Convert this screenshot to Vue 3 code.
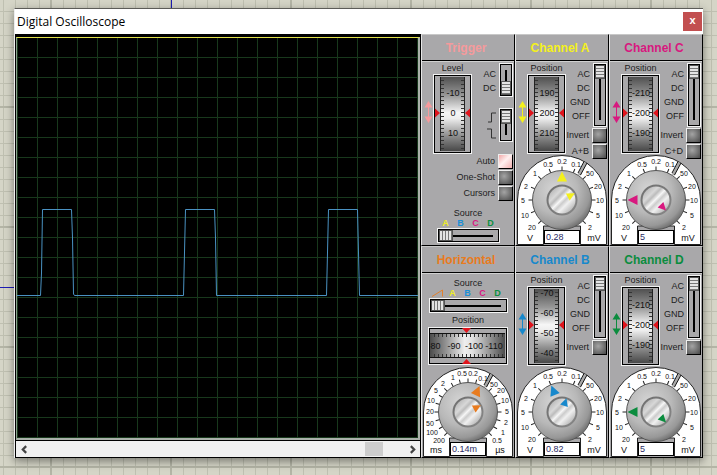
<script setup>
import { reactive } from 'vue'

const sourceColors = { A: '#f0ee28', B: '#1c8fd6', C: '#d81884', D: '#0c8f42' }
const couplings = ['AC', 'DC', 'GND', 'OFF']

const voltScale = {
  step: 22.5,
  marks: [
    [-6, '20', -30, 27], [-5, '10', -37, 15], [-4, '5', -39, 0], [-3, '2', -36, -14], [-2, '1', -27, -27],
    [-1, '0.5', -14, -36], [0, '0.2', 0, -39], [1, '0.1', 14, -36], [2, '50', 28, -27], [3, '20', 36, -14],
    [4, '10', 38, 0], [5, '5', 36, 15], [6, '2', 28, 27]
  ],
  units: ['V', 'mV']
}
const timeScale = {
  step: 15,
  marks: [
    [-9, '200', -29, 28], [-8, '100', -36, 20], [-7, '50', -38, 11], [-6, '20', -38, -1], [-5, '10', -37, -12],
    [-4, '5', -32, -22], [-3, '2', -25, -29], [-2, '1', -15, -35], [-1, '0.5', -6, -39], [0, '0.2', 5, -39],
    [1, '0.1', 15, -34], [3, '50', 26, -28], [4, '20', 33, -22], [5, '10', 37, -12], [6, '5', 39, -1],
    [7, '2', 38, 10], [8, '1', 35, 20], [9, '0.5', 29, 28]
  ],
  units: ['ms', 'µs']
}

function channel(letter, color, marks, offset, toggles, value, coarse, fine) {
  return {
    id: 'channel-' + letter.toLowerCase(),
    title: 'Channel ' + letter,
    color,
    wheel: { label: 'Position', marks, offset },
    switches: [{ id: 'coupling', options: couplings, value: 0, size: 'tall' }],
    toggles: toggles.map((text) => ({ text, on: false })),
    dial: { scale: voltScale, value, coarse, fine }
  }
}

const modules = reactive([
  {
    id: 'trigger',
    title: 'Trigger',
    color: '#f59a9c',
    wheel: { label: 'Level', marks: ['-10', '0', '10'], offset: 18 },
    switches: [
      { id: 'coupling', options: ['AC', 'DC'], value: 1, size: 'short' },
      { id: 'edge', options: ['rise', 'fall'], edges: true, value: 0, size: 'short' }
    ],
    toggles: [{ text: 'Auto', on: true }, { text: 'One-Shot', on: false }, { text: 'Cursors', on: false }],
    source: { ramp: false, value: 0 }
  },
  channel('A', '#f4f01c', ['190', '200', '210'], 18, ['Invert', 'A+B'], '0.28', 0, 62),
  channel('C', '#d8187f', ['-210', '-200', '-190'], 18, ['Invert', 'C+D'], '5', -90, 136),
  {
    id: 'horizontal',
    title: 'Horizontal',
    color: '#e87b1e',
    source: { ramp: true, value: 0 },
    band: { marks: ['-80', '-90', '-100', '-110'] },
    dial: { scale: timeScale, value: '0.14m', coarse: 24, fine: 62 }
  },
  channel('B', '#1788cc', ['-70', '-60', '-50', '-40'], 6, ['Invert'], '0.82', -22, 18),
  channel('D', '#0b8c3e', ['-210', '-200', '-190'], 18, ['Invert'], '5', -90, 136)
])

const ticks = Array.from({ length: 18 }, (_, i) => 6 + i * 4)
</script>

<template>
  <main class="desk">
    <span class="wire wire-top"></span>
    <span class="wire wire-left"></span>
    <svg class="defs" aria-hidden="true">
      <defs>
        <linearGradient id="rollV" x1="0" y1="0" x2="0" y2="1">
          <stop offset="0" stop-color="#505050" /><stop offset=".25" stop-color="#989898" />
          <stop offset=".48" stop-color="#f6f6f6" /><stop offset=".56" stop-color="#eee" />
          <stop offset=".78" stop-color="#949494" /><stop offset="1" stop-color="#484848" />
        </linearGradient>
        <linearGradient id="rollH" x1="0" y1="0" x2="1" y2="0">
          <stop offset="0" stop-color="#4c4c4c" /><stop offset=".22" stop-color="#959595" />
          <stop offset=".46" stop-color="#eee" /><stop offset=".56" stop-color="#e2e2e2" />
          <stop offset=".8" stop-color="#929292" /><stop offset="1" stop-color="#4c4c4c" />
        </linearGradient>
        <radialGradient id="knob" cx=".38" cy=".34" r=".7">
          <stop offset="0" stop-color="#d6d6d6" /><stop offset=".55" stop-color="#b8b8b8" />
          <stop offset=".85" stop-color="#989898" /><stop offset="1" stop-color="#6c6c6c" />
        </radialGradient>
        <linearGradient id="ring" x1="0" y1="0" x2="1" y2="1">
          <stop offset="0" stop-color="#6e6e6e" /><stop offset="1" stop-color="#888" />
        </linearGradient>
        <linearGradient id="cap" x1="0" y1="0" x2="1" y2="1">
          <stop offset=".1" stop-color="#b4b4b4" /><stop offset=".3" stop-color="#d8d8d8" />
          <stop offset=".38" stop-color="#bcbcbc" /><stop offset=".48" stop-color="#f6f6f6" />
          <stop offset=".56" stop-color="#ccc" /><stop offset=".66" stop-color="#f0f0f0" />
          <stop offset=".9" stop-color="#b0b0b0" />
        </linearGradient>
        <clipPath id="rollClip"><rect x="7" y="3" width="25" height="74" /></clipPath>
        <clipPath id="bandClip"><rect x="2" y="6" width="75" height="25" /></clipPath>
      </defs>
    </svg>

    <section class="window">
      <header class="titlebar">
        <h1>Digital Oscilloscope</h1>
        <button class="close" type="button" aria-label="Close">x</button>
      </header>

      <div class="instrument">
        <div class="scope">
          <div class="screen">
            <svg viewBox="0 0 401 400" preserveAspectRatio="none">
              <path
                d="M0 257.5H23.5L24.5 235 25.5 171.5H54.5L55.5 200 56.5 256 57.5 257.5H166.5L168.5 171.5H197.5L198.5 200 199.5 257.5H309.5L311.5 171.5H340.5L342.5 257.5H401"
              />
            </svg>
          </div>
          <div class="scrollbar">
            <button type="button" aria-label="Scroll left">
              <svg viewBox="0 0 8 8"><path d="M5.5 1 2.5 4l3 3" /></svg>
            </button>
            <span class="rail"><span class="grip"></span></span>
            <button type="button" aria-label="Scroll right">
              <svg viewBox="0 0 8 8"><path d="M2.5 1l3 3-3 3" /></svg>
            </button>
          </div>
        </div>

        <div class="modules">
          <section v-for="m in modules" :key="m.id" class="module" :class="m.id">
            <h2 :style="{ color: m.color }">{{ m.title }}</h2>
            <div class="body">
              <div v-if="m.wheel" class="strip" :class="{ compact: m.dial }">
                <svg class="arrows" viewBox="0 0 9 22" :style="{ color: m.color }">
                  <path d="M4.5 0 8.5 6.5H.5ZM4.5 22 .5 15.5H8.5ZM4 5H5V17H4Z" fill="currentColor" />
                </svg>
                <div class="position">
                  <label :for="m.id + '-wheel'">{{ m.wheel.label }}</label>
                  <div class="stack">
                    <svg class="wheel" viewBox="0 0 39 80">
                      <rect x=".5" y=".5" width="38" height="79" fill="none" stroke="#f2f2f2" />
                      <rect x="1.5" y="1.5" width="36" height="77" fill="none" stroke="#000" />
                      <rect x="7" y="3" width="25" height="74" fill="url(#rollV)" />
                      <path d="M7.5 3V77M31.5 3V77" stroke="#222" />
                      <g clip-path="url(#rollClip)">
                        <path v-for="t in ticks" :key="t" :d="`M8 ${t}.5h3M28 ${t}.5h3`" stroke="#333" />
                        <text
                          v-for="(text, i) in m.wheel.marks"
                          :key="text"
                          x="20"
                          :y="m.wheel.offset + i * 20 + 4"
                          class="roll-text"
                        >{{ text }}</text>
                      </g>
                      <path d="M2 34.5 7 39 2 43.5ZM37 34.5 32 39l5 4.5Z" fill="#e0141c" />
                    </svg>
                    <input :id="m.id + '-wheel'" class="ghost" type="range" />
                  </div>
                </div>
                <div class="side">
                  <div v-for="s in m.switches" :key="s.id" class="switch">
                    <span class="options" :class="{ edges: s.edges }">
                      <template v-if="s.edges">
                        <svg viewBox="0 0 9 11"><path d="M1 10H4.5V1H9" /></svg>
                        <svg viewBox="0 0 9 11"><path d="M0 1H4.5V10H9" /></svg>
                      </template>
                      <template v-else>
                        <label v-for="o in s.options" :key="o" :for="m.id + '-' + s.id">{{ o }}</label>
                      </template>
                    </span>
                    <span class="slot upright" :class="s.size">
                      <input
                        :id="m.id + '-' + s.id"
                        v-model="s.value"
                        type="range"
                        min="0"
                        :max="s.options.length - 1"
                        :aria-label="s.id"
                      />
                    </span>
                  </div>
                  <div v-for="t in m.toggles" :key="t.text" class="toggle">
                    <label :for="m.id + '-' + t.text">{{ t.text }}</label>
                    <button
                      :id="m.id + '-' + t.text"
                      type="button"
                      :class="{ lit: t.on }"
                      :aria-pressed="t.on"
                      @click="t.on = !t.on"
                    ></button>
                  </div>
                </div>
              </div>

              <div v-if="m.source" class="source">
                <label :for="m.id + '-source'">Source</label>
                <div class="letters">
                  <svg v-if="m.source.ramp" viewBox="0 0 14 8"><path d="M1 7.5 11.5 1V7.5" /></svg>
                  <b v-for="(c, name) in sourceColors" :key="name" :style="{ color: c }">{{ name }}</b>
                </div>
                <span class="slot level" :class="{ wide: m.source.ramp }">
                  <input
                    :id="m.id + '-source'"
                    v-model="m.source.value"
                    type="range"
                    min="0"
                    :max="m.source.ramp ? 4 : 3"
                  />
                </span>
              </div>

              <div v-if="m.band" class="band">
                <label :for="m.id + '-band'">Position</label>
                <div class="stack">
                  <svg viewBox="0 0 80 38">
                    <rect x=".5" y=".5" width="79" height="37" fill="none" stroke="#f2f2f2" />
                    <rect x="1.5" y="1.5" width="77" height="35" fill="none" stroke="#000" />
                    <rect x="2" y="6" width="75" height="25" fill="url(#rollH)" />
                    <path d="M2 6.5H77M2 30.5H77" stroke="#111" />
                    <g clip-path="url(#bandClip)">
                      <path v-for="t in ticks" :key="t" :d="`M${t}.5 7v3M${t}.5 27v3`" stroke="#333" />
                      <text
                        v-for="(text, i) in m.band.marks"
                        :key="text"
                        :x="6 + i * 20"
                        y="22"
                        class="roll-text"
                      >{{ text }}</text>
                    </g>
                    <path d="M34 1H43L38.5 6ZM34 37H43L38.5 32Z" fill="#e0141c" />
                  </svg>
                  <input :id="m.id + '-band'" class="ghost" type="range" />
                </div>
              </div>

              <div v-if="m.dial" class="dial stack">
                <svg viewBox="-45 -45 90 90">
                  <path
                    d="M-44.5 44.5V0A44.5 44.5 0 0 1 44.5 0V44.5H18.5V26H-18.5V44.5Z"
                    fill="#fff"
                    stroke="#222"
                  />
                  <path d="M17 -25 23.5 -37.5" stroke="#a8a8a8" stroke-width="3" />
                  <path d="M16 -27 22 -38.5M18.5 -25 25 -37" stroke="#111" />
                  <path
                    v-for="mark in m.dial.scale.marks"
                    :key="'t' + mark[0]"
                    d="M0 -33.5V-29"
                    stroke="#222"
                    :transform="`rotate(${mark[0] * m.dial.scale.step})`"
                  />
                  <circle r="29.5" fill="url(#knob)" stroke="#555" />
                  <circle r="15.5" fill="url(#ring)" />
                  <circle r="13.5" fill="url(#cap)" />
                  <g :fill="m.color">
                    <path d="M0 -28.5 5 -18.5H-5Z" :transform="`rotate(${m.dial.coarse})`" />
                    <path d="M0 -14.5 4 -6.5H-4Z" :transform="`rotate(${m.dial.fine})`" />
                  </g>
                  <text
                    v-for="mark in m.dial.scale.marks"
                    :key="mark[0]"
                    :x="mark[2]"
                    :y="mark[3] + 3"
                    class="mark"
                  >{{ mark[1] }}</text>
                  <text x="-32" y="41" class="unit">{{ m.dial.scale.units[0] }}</text>
                  <text x="32" y="41" class="unit">{{ m.dial.scale.units[1] }}</text>
                </svg>
                <input class="ghost" type="range" :aria-label="m.title + ' scale'" />
                <input v-model="m.dial.value" class="readout" type="text" :aria-label="m.title + ' value'" />
              </div>
            </div>
          </section>
        </div>
      </div>
    </section>
  </main>
</template>

<style>
body {
  background-color: #d5d5c7;
  background-image:
    linear-gradient(90deg, #b4b5a6 2px, transparent 2px),
    linear-gradient(#b4b5a6 2px, transparent 2px),
    linear-gradient(90deg, #bfc0b1 1px, transparent 1px),
    linear-gradient(#bfc0b1 1px, transparent 1px);
  background-size: 120px 120px, 120px 120px, 12px 12px, 12px 12px;
  background-position: 50px 0, 0 106px, 3px 0, 0 11px;
}
</style>

<style scoped>
.desk {
  position: relative;
  padding: 8px 14px 17px;
  font: 9px/11px "Liberation Sans", Arial, sans-serif;
  color: #1c1c1c;
}
.defs {
  position: absolute;
  width: 0;
  height: 0;
}
.wire {
  position: absolute;
  background: #1c1cb4;
}
.wire-top {
  top: 0;
  left: 171px;
  width: 1px;
  height: 8px;
}
.wire-left {
  top: 287px;
  left: 0;
  width: 14px;
  height: 1px;
}
.window {
  position: relative;
  border-top: 1px solid #5c5c58;
  border-left: 1px solid #eee;
  background: #fff;
  box-shadow: 0 3px 9px rgba(0, 0, 0, 0.45);
}
.titlebar {
  display: flex;
  align-items: center;
  justify-content: space-between;
  height: 25px;
  padding: 0 1px 0 2px;
}
h1 {
  margin: 0;
  font: 400 12px/20px "Open Sans", "Noto Sans", sans-serif;
  color: #000;
}
.close {
  width: 19px;
  height: 19px;
  margin-bottom: 1px;
  padding: 0 0 2px;
  border: 0;
  background: #c24f50;
  color: #fff;
  font: 700 11px/16px "Liberation Sans", Arial, sans-serif;
}
.instrument {
  display: flex;
  background: #a9a8aa;
}
.scope {
  flex: 1;
  display: flex;
  flex-direction: column;
  border: solid #000;
  border-width: 2px 1px 1px;
  background: #000;
}
.screen {
  position: relative;
  flex: 1;
  margin-top: 1px;
  border: solid;
  border-width: 1px 2px 2px 1px;
  border-color: #e2e24a #aab0aa #aab0aa #8da08f;
  background-color: #000;
  background-image:
    linear-gradient(90deg, #18381c 1px, transparent 1px),
    linear-gradient(#18381c 1px, transparent 1px);
  background-size: 20px 20px;
  background-position: 0 -1px;
}
.screen svg {
  position: absolute;
  inset: 0;
  width: 100%;
  height: 100%;
}
.screen path {
  fill: none;
  stroke: #4a92c2;
}
.scrollbar {
  display: flex;
  height: 16px;
  margin-top: 1px;
  background: #f0f0f0;
}
.scrollbar button {
  display: grid;
  place-items: center;
  width: 16px;
  padding: 0;
  border: 0;
  background: none;
}
.scrollbar svg {
  width: 9px;
  height: 9px;
  fill: none;
  stroke: #444;
  stroke-width: 2;
}
.rail {
  flex: 1;
  display: flex;
  justify-content: flex-end;
  padding: 1px 21px 1px 0;
}
.grip {
  width: 18px;
  background: #cdcdcd;
}
.modules {
  display: grid;
  grid-template-columns: repeat(3, 94px);
}
.module {
  border: 1px solid #000;
  border-left-color: #e6e6e6;
  border-top-color: #c8c8c8;
}
h2 {
  display: grid;
  place-items: center;
  height: 25px;
  margin: 0;
  padding-right: 4px;
  border-bottom: 1px solid #000;
  font-size: 12px;
  line-height: 24px;
}
.body {
  display: flex;
  flex-direction: column;
  align-items: center;
  padding-top: 1px;
  border-top: 1px solid #d0d0d0;
}
.strip {
  align-self: stretch;
  display: flex;
  padding: 0 1px 0 2px;
}
.strip.compact {
  height: 92px;
}
.arrows {
  flex: none;
  width: 9px;
  height: 22px;
  margin-top: 38px;
}
.position {
  flex: none;
  display: grid;
  align-content: start;
  justify-items: center;
}
.stack {
  display: grid;
}
.stack > * {
  grid-area: 1 / 1;
}
.wheel {
  width: 39px;
  height: 80px;
}
.ghost {
  appearance: none;
  width: 0;
  min-width: 100%;
  height: 100%;
  margin: 0;
  opacity: 0;
}
.roll-text {
  font-size: 9px;
  text-anchor: middle;
  fill: #111;
}
.side {
  flex: 1;
  display: flex;
  flex-direction: column;
  gap: 1px;
  min-width: 0;
}
.switch,
.toggle {
  display: flex;
  flex: none;
  justify-content: flex-end;
  gap: 3px;
  white-space: nowrap;
}
.trigger .switch {
  height: 44px;
}
.trigger .switch + .toggle {
  margin-top: 1px;
}
.toggle {
  align-items: center;
}
.options {
  display: grid;
  align-content: start;
  justify-items: end;
  padding-top: 4px;
  line-height: 14px;
}
.edges {
  gap: 5px;
}
.edges svg {
  width: 9px;
  height: 11px;
  fill: none;
  stroke: #333;
}
.toggle button {
  flex: none;
  box-sizing: border-box;
  width: 15px;
  height: 15px;
  padding: 0;
  border: 1px solid #000;
  border-top-color: #eee;
  border-left-color: #eee;
  background: radial-gradient(circle at 40% 40%, #a4a4a4, #484848);
}
.toggle .lit {
  background: linear-gradient(135deg, #f3a9a9, #fff0f0 45%, #f2b0b0);
}
.slot {
  display: flex;
  flex: none;
  border: 1px solid #f4f4f4;
  outline: 1px solid #000;
  outline-offset: -2px;
  padding: 1px;
  box-sizing: border-box;
}
.slot input {
  appearance: none;
  margin: 0;
  min-width: 0;
  min-height: 0;
}
.upright {
  width: 14px;
}
.upright.tall {
  height: 64px;
}
.upright.short {
  height: 34px;
}
.upright input {
  writing-mode: vertical-lr;
  width: 10px;
  height: 100%;
  background: linear-gradient(#000, #000) center / 2px calc(100% - 10px) no-repeat;
}
.level {
  width: 63px;
  height: 15px;
}
.level.wide {
  width: 79px;
}
.level input {
  width: 100%;
  height: 11px;
  background: linear-gradient(#000, #000) center / calc(100% - 10px) 2px no-repeat;
}
.slot input::-webkit-slider-thumb {
  appearance: none;
  box-sizing: border-box;
  border: 1px solid #555;
}
.upright input::-webkit-slider-thumb {
  width: 10px;
  height: 14px;
  background: repeating-linear-gradient(#e4e4e4 0 2px, #777 2px 3px);
}
.level input::-webkit-slider-thumb {
  width: 14px;
  height: 11px;
  background: repeating-linear-gradient(90deg, #e4e4e4 0 2px, #777 2px 3px);
}
.source {
  display: grid;
  justify-items: center;
  margin-top: 3px;
}
.trigger .source {
  margin-top: 7px;
}
.letters {
  display: flex;
  line-height: 9px;
}
.letters b {
  width: 15px;
  text-align: center;
}
.letters svg {
  width: 14px;
  height: 8px;
  fill: none;
  stroke: #e08030;
}
.band {
  display: grid;
  justify-items: center;
  row-gap: 1px;
  margin: 2px 0;
}
.band svg {
  width: 80px;
  height: 38px;
}
.dial svg {
  width: 90px;
  height: 90px;
}
.mark {
  font-size: 7px;
  text-anchor: middle;
  fill: #111;
}
.unit {
  font-size: 9px;
  text-anchor: middle;
  fill: #111;
}
.dial .readout {
  align-self: end;
  justify-self: center;
  box-sizing: border-box;
  width: 36px;
  height: 14px;
  margin-bottom: 1px;
  padding: 0 1px;
  border: 1px solid #000;
  background: #fff;
  color: #2a2a66;
  font: 9px/11px "Liberation Sans", Arial, sans-serif;
}
</style>
